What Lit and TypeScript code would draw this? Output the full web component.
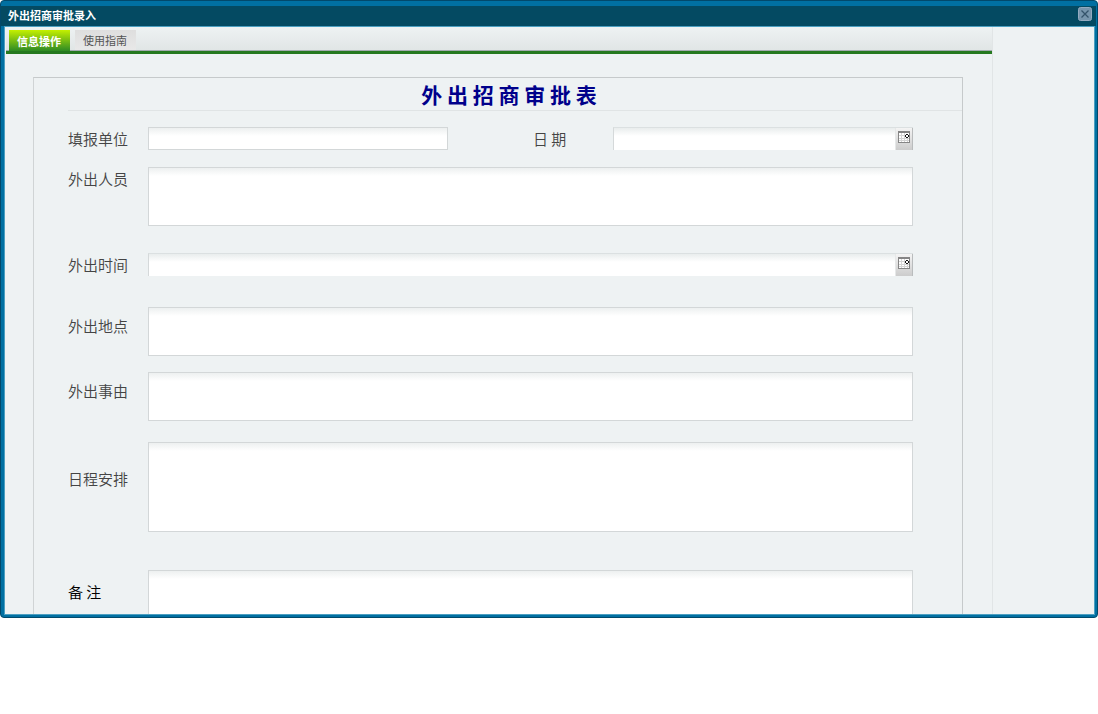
import { LitElement, html, css, nothing } from "lit";
import { customElement, property, state } from "lit/decorators.js";
import { classMap } from "lit/directives/class-map.js";

@customElement("date-box")
class DateBox extends LitElement {
  @property() label = "";

  static styles = css`
    :host { display: block; }
    .box {
      display: flex;
      box-sizing: border-box;
      height: 23px;
      border-left: 1px solid #d5d9da;
      border-top: 1px solid #dbe0e1;
      background: linear-gradient(#e9eded, #fff 8px);
    }
    input {
      flex: 1;
      min-width: 0;
      border: 0;
      padding: 0 4px;
      background: none;
      font: 14px "Noto Sans CJK SC", sans-serif;
      outline: none;
    }
    button {
      display: flex;
      justify-content: center;
      align-items: flex-start;
      box-sizing: border-box;
      width: 18px;
      padding: 3px 0 0;
      border: 0;
      border-left: 1px solid #e6e8e8;
      border-right: 1px solid #b9bcbd;
      background: linear-gradient(#f4f4f4, #dcdcdc 60%, #cccccc);
    }
    svg { flex: none; }
  `;

  render() {
    return html`<div class="box">
      <input type="text" aria-label=${this.label} />
      <button type="button" aria-label="选择日期">
        <svg width="12" height="12" viewBox="0 0 12 12" shape-rendering="crispEdges">
          <rect x="0.5" y="0.5" width="11" height="11" fill="#fff" stroke="#858585" />
          <path d="M0 0h12v2H0z" fill="#858585" />
          <path d="M3.5 2v9M6.5 2v9M9.5 7v4M1 4.5h6M1 7.5h10M1 9.5h10" stroke="#d4d4d4" />
          <path d="M8 3h2v1h1v2h-1v1H8V6H7V4h1z" fill="#111" />
          <path d="M8 4h2v2H8z" fill="#fff" />
        </svg>
      </button>
    </div>`;
  }
}

@customElement("app-root")
class AppRoot extends LitElement {
  @state() private tab = 0;

  static styles = css`
    :host {
      display: block;
      font-family: "Noto Sans CJK SC", sans-serif;
      color: #444;
    }
    .window {
      box-sizing: border-box;
      display: flex;
      flex-direction: column;
      height: calc(100vh - 96px);
      overflow: hidden;
      border: 1px solid #02496b;
      border-radius: 4px;
      background: #0170a2;
      padding: 1px 2px 2px 3px;
    }
    .titlebar {
      display: flex;
      justify-content: space-between;
      align-items: center;
      flex: none;
      height: 20px;
      margin: 4px -1px 0 -3px;
      padding: 0 4px 0 7px;
      background: #044a62;
      color: #fff;
    }
    .titlebar h1 {
      margin: 0;
      padding-bottom: 2px;
      font-size: 11px;
      line-height: 18px;
      font-weight: 700;
    }
    .close {
      display: flex;
      width: 14px;
      height: 14px;
      padding: 0;
      margin-bottom: 5px;
      border: 0;
      background: none;
    }
    .body {
      display: flex;
      flex: 1;
      min-height: 0;
      overflow: hidden;
      border: 1px solid #4b9fc1;
      background: #eef2f3;
    }
    .pane {
      flex: 1;
      min-width: 0;
      border-right: 1px solid #e1e5e6;
    }
    .side { width: 101px; flex: none; }
    .tabs {
      box-sizing: border-box;
      display: flex;
      align-items: flex-start;
      gap: 5px;
      height: 27px;
      margin-left: 1px;
      padding: 3px 0 0 3px;
      border-bottom: 3px solid #25791f;
      background: linear-gradient(#eef2f3, #e0e5e5);
      box-shadow: inset 0 -1px #a3abb0;
    }
    .tab {
      height: 20px;
      padding: 0 9px 0 8px;
      border: 0;
      background: linear-gradient(#dedede, #e8e8e8);
      color: #555;
      font-family: inherit;
      font-size: 11px;
      line-height: 20px;
    }
    .tab.active {
      height: 21px;
      background: linear-gradient(#c4f000, #2d8a24);
      color: #fff;
      font-weight: 700;
    }
    .panel {
      margin: 23px 29px 0 28px;
      padding: 0 0 24px 34px;
      border: 1px solid #c6cacb;
      border-left-color: #d0d4d5;
    }
    .panel h2 {
      margin: 0;
      padding-right: 12px;
      border-bottom: 1px solid #e0e4e5;
      color: #00008b;
      font-size: 21px;
      line-height: 32px;
      font-weight: 700;
      text-align: center;
    }
    form { padding: 16px 49px 0 0; }
    .row {
      display: grid;
      grid-template-columns: 80px 1fr;
      align-items: start;
      margin-bottom: 16px;
    }
    .row.pair { grid-template-columns: 80px 1fr 85px 80px 1fr; }
    .pair .second { grid-column: 4; }
    .gap-m { margin-bottom: 21px; }
    .gap-l { margin-bottom: 27px; }
    .gap-date { margin-bottom: 30px; }
    .gap-xl { margin-bottom: 38px; }
    .drop-s label { padding-top: 7px; }
    .drop-m label { padding-top: 10px; }
    .drop-l label { padding-top: 25px; }
    label { font-size: 15px; line-height: 24px; font-weight: 350; }
    .dark label { color: #000; }
    .field {
      box-sizing: border-box;
      display: block;
      width: 100%;
      height: 23px;
      margin: 0;
      padding: 2px 4px;
      border: 1px solid #d3d7d8;
      border-radius: 0;
      background: linear-gradient(#edf0f0, #fff 8px);
      font: 14px "Noto Sans CJK SC", sans-serif;
      resize: none;
      outline: none;
    }
    .short { height: 49px; }
    .medium { height: 59px; }
    .tall { height: 90px; }
  `;

  private area(id: string, label: string, size: string, row: string) {
    return html`<div class="row ${row}">
      <label for=${id}>${label}</label>
      <textarea id=${id} class="field ${size}"></textarea>
    </div>`;
  }

  private form() {
    return html`<div class="panel">
      <h2>外 出 招 商 审 批 表</h2>
      <form>
        <div class="row pair">
          <label for="unit">填报单位</label>
          <input id="unit" class="field" type="text" />
          <label class="second" for="date">日 期</label>
          <date-box id="date" label="日期"></date-box>
        </div>
        ${this.area("people", "外出人员", "medium", "gap-l")}
        <div class="row gap-date">
          <label for="time">外出时间</label>
          <date-box id="time" label="外出时间"></date-box>
        </div>
        ${this.area("place", "外出地点", "short", "drop-s")}
        ${this.area("reason", "外出事由", "short", "gap-m drop-s")}
        ${this.area("plan", "日程安排", "tall", "gap-xl drop-l")}
        ${this.area("note", "备 注", "tall", "drop-m dark")}
      </form>
    </div>`;
  }

  render() {
    return html`<section class="window">
      <header class="titlebar">
        <h1>外出招商审批录入</h1>
        <button class="close" type="button" aria-label="关闭">
          <svg width="14" height="14" viewBox="0 0 14 14">
            <rect x="0.5" y="0.5" width="13" height="13" rx="2" fill="#7795ad" stroke="#94abc0" />
            <path d="M3.5 3.5l7 7M10.5 3.5l-7 7" stroke="#34536b" stroke-width="1.3" />
          </svg>
        </button>
      </header>
      <div class="body">
        <main class="pane">
          <nav class="tabs" role="tablist">
            ${["信息操作", "使用指南"].map(
              (name, i) => html`<button
                type="button"
                role="tab"
                aria-selected=${this.tab === i ? "true" : "false"}
                class=${classMap({ tab: true, active: this.tab === i })}
                @click=${() => (this.tab = i)}
              >${name}</button>`
            )}
          </nav>
          ${this.tab === 0 ? this.form() : nothing}
        </main>
        <div class="side"></div>
      </div>
    </section>`;
  }
}
